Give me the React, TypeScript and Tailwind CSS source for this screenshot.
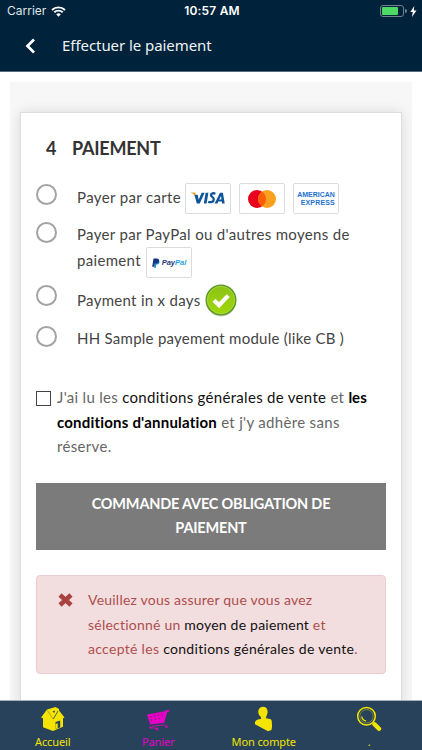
import React from "react";

function Radio() {
  return <span className="block h-[21px] w-[21px] shrink-0 rounded-full border-2 border-[#a3a3a3] bg-white" />;
}

function PayCard({ children }: { children: React.ReactNode }) {
  return (
    <span className="flex h-[31px] w-[46px] shrink-0 items-center justify-center rounded-[2px] border border-[#dcdcdc] bg-white">
      {children}
    </span>
  );
}

function Visa() {
  return (
    <svg width="44" height="29" viewBox="0 0 44 29">
      <path d="M5 8.5h4.3l1.4 6.5-1.8-2.6C8.300 11 7 9.700 5 8.800z" fill="#eba337" />
      <path d="M8.500 11l2.300 8.500h3L18.600 8.700h-3l-2.900 7-1-5z" fill="#0e5599" />
      <path d="M19.600 8.700h2.800l-1.800 10.800h-2.800z" fill="#0e5599" />
      <path d="M29.400 9.700c-2-.8-4.300-.5-4.500 1.200-.2 2 3 2 2.900 4.500-.1 2.700-2.900 3.300-5.600 2.400" fill="none" stroke="#0e5599" strokeWidth="2.300" />
      <path d="M28.600 19.500L34 8.700h2.900L38.700 19.500h-2.600l-.3-1.900h-3.500l-.9 1.900zM33.200 15.500h2.300l-.5-3.500z" fill="#0e5599" fillRule="evenodd" />
    </svg>
  );
}

function Mastercard() {
  return (
    <svg width="30" height="20" viewBox="0 0 30 20">
      <circle cx="10" cy="10" r="9" fill="#e8001d" />
      <circle cx="20" cy="10" r="9" fill="#f9a01f" />
      <path d="M15 2.520a9 9 0 0 1 0 14.960a9 9 0 0 1 0-14.960z" fill="#fb5e0b" />
    </svg>
  );
}

function PayPalMark() {
  return (
    <svg width="8" height="10" viewBox="0 0 8 10">
      <path d="M3 2h3.500c1.300.5 1.200 2.200.6 3.200C6.500 6.200 5.500 6.500 4.300 6.500L3.800 9.700H2z" fill="#1f8fd6" />
      <path d="M1.500.5h3.200c2 0 2.700 1.100 2.300 2.700C6.600 5 5.300 5.600 3.500 5.600h-.8L2.200 8.700H.2z" fill="#14357f" />
    </svg>
  );
}

function GreenCheck() {
  return (
    <svg width="32" height="33" viewBox="0 0 32 33" className="shrink-0">
      <defs>
        <linearGradient id="lime" x1="0" y1="0" x2="0" y2="1">
          <stop offset="0" stopColor="#8cc414" />
          <stop offset="1" stopColor="#9fd60a" />
        </linearGradient>
      </defs>
      <ellipse cx="16" cy="17.500" rx="15" ry="15" fill="#c9cfc0" />
      <circle cx="16" cy="16" r="15.500" fill="#5d9a22" />
      <circle cx="16" cy="16" r="13.700" fill="url(#lime)" stroke="#b4dd55" strokeWidth="0.800" />
      <path d="M9 16.300l5 4.900 9.200-9.600" fill="none" stroke="#fff" strokeWidth="4.200" />
    </svg>
  );
}

function StatusBar() {
  return (
    <div className="flex h-[22px] items-center pl-[7px] pr-[5px] font-[Inter,sans-serif] text-white">
      <div className="flex flex-1 items-center gap-[5px]">
        <span className="text-[12px] text-[#dfe5ea]">Carrier</span>
        <svg width="15" height="11" viewBox="0 0 15 11">
          <path d="M1 4a9.400 9.400 0 0 1 13 0M3.300 6.300a6 6 0 0 1 8.400 0" fill="none" stroke="#fff" strokeWidth="1.900" />
          <path d="M5.200 8.300a3.400 3.400 0 0 1 4.600 0L7.500 10.700z" fill="#fff" />
        </svg>
      </div>
      <span className="text-[12px] font-semibold tracking-[0.200px]">10:57 AM</span>
      <div className="flex flex-1 items-center justify-end">
        <span className="flex h-[12px] w-[24px] rounded-[3px] border border-[#70818f] p-px">
          <span className="w-[16px] rounded-[1px] bg-[#4cd964]" />
        </span>
        <span className="ml-px h-[4px] w-[2px] rounded-r-full bg-[#70818f]" />
        <svg width="7" height="11" viewBox="0 0 7 11" className="ml-[3px]">
          <path d="M4.300 0L0.300 6h2.500L2 11l4.500-6.500H3.800z" fill="#fff" />
        </svg>
      </div>
    </div>
  );
}

function HomeIcon() {
  return (
    <svg width="26" height="26" viewBox="0 0 26 26">
      <path d="M1 11.500L7 3.500 15.500 1 19 3v1.500l5.500 7-1.500.8v8.500L13 25 3 21.200v-9z" fill="#f5e400" />
      <path d="M13.300 13L18 5" fill="none" stroke="#27425a" strokeWidth="0.800" />
      <path d="M7.500 4.500l5.500 8.500" fill="none" stroke="#8c8b34" strokeWidth="0.700" />
      <path d="M15.500 22.700v-6.700l4.700-1.600v7z" fill="#27425a" />
      <path d="M15.500 22.700V18l2.200-.8V22z" fill="#f5e400" />
      <path d="M12.500 5.500l2.500-1-.7 2.500z" fill="#27425a" />
    </svg>
  );
}

function CartIcon() {
  return (
    <svg width="26" height="26" viewBox="0 0 26 26">
      <path d="M2 8.500l18-3.300 1-1.200 3.500.3-.3 1.200-2 .4-3 10.800-14 1.800z" fill="#e800c8" />
      <path d="M5 10l1.500 1M9 9l1 1.500M13 8.500l.8 1.500M17 7.800l.5 1.500M6 13.500l1 1M10 13l.7 1M14 12.300l.6 1" stroke="#80236f" strokeWidth="1.200" />
      <path d="M7 20.300l13-1.500 2 2.200M5 21.500l7 1" fill="none" stroke="#c40fab" strokeWidth="1" />
      <circle cx="5.500" cy="21.500" r="1.300" fill="#c40fab" />
      <circle cx="12" cy="23" r="1.400" fill="#c40fab" />
      <circle cx="21.500" cy="20.800" r="1.300" fill="#c40fab" />
    </svg>
  );
}

function UserIcon() {
  return (
    <svg width="26" height="26" viewBox="0 0 26 26">
      <path d="M9.500 1.500C11.500.3 15 .7 16 3c1 2.200.8 5-.5 7l-.7 2.300 4.500.8c2 .8 1.500 4 1.800 7.200L20.500 24 17 25.200 4 18.200c-.4-2.500.5-4 3-4.700l3.200-.8-.5-1.900C6.500 8.500 6.500 3 9.500 1.500z" fill="#f5e400" />
    </svg>
  );
}

function SearchIcon() {
  return (
    <svg width="26" height="26" viewBox="0 0 26 26">
      <circle cx="10.500" cy="10.300" r="8.800" fill="none" stroke="#f5e400" strokeWidth="1.500" />
      <circle cx="10.500" cy="10.300" r="6.700" fill="none" stroke="#b5ae25" strokeWidth="0.600" />
      <path d="M5.800 10.500c.3 2.300 1.800 4 4.300 4.400" fill="none" stroke="#f5e400" strokeWidth="1.300" />
      <path d="M18.500 18.300l4.500 4.500" stroke="#f5e400" strokeWidth="4.400" strokeLinecap="round" />
    </svg>
  );
}

function Tab({ icon, label, active }: { icon: React.ReactNode; label: string; active?: boolean }) {
  return (
    <div className={`flex flex-1 flex-col items-center pt-[5px] ${active ? "text-[#e800c8]" : "text-[#f5e400]"}`}>
      {icon}
      <span className="mt-[2px] h-[16px] text-[11px] leading-[16px] tracking-[-0.100px] whitespace-nowrap">{label}</span>
    </div>
  );
}

export default function App() {
  return (
    <div className="flex h-[750px] w-[422px] flex-col overflow-hidden bg-white font-[Lato,sans-serif] text-[15px] whitespace-nowrap text-[#444]">
      <header className="h-[72px] shrink-0 border-b border-[#56697a] bg-[#00223a]">
        <StatusBar />
        <div className="flex h-[47px] items-center pl-[25px]">
          <svg width="11" height="16" viewBox="0 0 11 16">
            <path d="M9 1.500L2.500 8 9 14.500" fill="none" stroke="#fff" strokeWidth="2.700" />
          </svg>
          <h1 className="-mt-px ml-[26px] font-['Noto_Sans',sans-serif] text-[15px] tracking-[-0.060px] text-[#eef2f5]">Effectuer le paiement</h1>
        </div>
      </header>

      <main className="mx-[10px] mt-[10px] h-[618px] shrink-0 overflow-hidden bg-[#f7f7f7] px-[10px] pt-[30px]">
        <section className="h-[600px] border border-[#dedede] bg-white px-[15px] shadow-[0_0_12px_rgba(0,0,0,0.120)]">
          <h2 className="flex h-[71px] items-center pl-[10px] text-[18px] font-bold text-[#333]">
            <span className="w-[26px]">4</span>
            <span className="tracking-[-0.250px]">PAIEMENT</span>
          </h2>

          <div className="flex h-[37px] items-start">
            <Radio />
            <div className="-mt-px ml-[20px] flex h-[31px] items-start">
              <span className="w-[108px] leading-[28px] tracking-[0.360px]">Payer par carte</span>
              <div className="flex gap-[8px]">
                <PayCard><Visa /></PayCard>
                <PayCard><Mastercard /></PayCard>
                <PayCard>
                  <span className="flex flex-col items-end font-['Liberation_Sans',sans-serif] text-[7px] leading-[8px] font-bold text-[#1f72cd]">
                    <span className="h-[8px]">AMERICAN</span>
                    <span className="h-[8px] tracking-[0.150px]">EXPRESS</span>
                  </span>
                </PayCard>
              </div>
            </div>
          </div>

          <div className="flex h-[64px] items-start pt-[1px]">
            <Radio />
            <div className="ml-[20px] flex flex-col">
              <span className="h-[25px] leading-[25px] tracking-[0.330px]">Payer par PayPal ou d'autres moyens de</span>
              <div className="flex h-[31px] items-start">
                <span className="w-[69px] leading-[26px] tracking-[0.330px]">paiement</span>
                <PayCard>
                  <span className="flex items-center gap-[2px] font-['Liberation_Sans',sans-serif] text-[7.500px] font-bold italic">
                    <PayPalMark />
                    <span className="leading-[10px] text-[#253b80]">Pay<span className="text-[#2ba3df]">Pal</span></span>
                  </span>
                </PayCard>
              </div>
            </div>
          </div>

          <div className="flex h-[41px] items-start">
            <Radio />
            <div className="-mt-px ml-[20px] flex h-[32px] items-center">
              <span className="w-[128px] tracking-[0.300px]">Payment in x days</span>
              <GreenCheck />
            </div>
          </div>

          <div className="flex h-[65px] items-start">
            <Radio />
            <span className="-mt-px ml-[20px] leading-[26px] tracking-[0.260px]">HH Sample payement module (like CB )</span>
          </div>

          <div className="flex h-[92px]">
            <span className="h-[15px] w-[15px] shrink-0 border border-[#444]" />
            <p className="-mt-[6px] ml-[6px] leading-[24.500px] text-[#666]">
              <span className="tracking-[0.300px]">J'ai lu les <span className="text-[#111]">conditions générales de vente</span> et </span>
              <b className="text-black">les</b>
              <br />
              <b className="tracking-[0.200px] text-black">conditions d'annulation</b>
              <span className="tracking-[0.320px]"> et j'y adhère sans<br />réserve.</span>
            </p>
          </div>

          <div className="flex h-[67px] flex-col items-center justify-center bg-[#7b7b7b] pb-[2px] text-[14.500px] leading-[23.500px] font-bold tracking-[-0.200px] text-white">
            <span>COMMANDE AVEC OBLIGATION DE</span>
            <span>PAIEMENT</span>
          </div>

          <div className="mt-[25px] flex h-[99px] rounded-[4px] border border-[#ecccd0] bg-[#f2dede] pt-[12px] pl-[21px] text-[14px] text-[#ae4e4e]">
            <svg width="15" height="14" viewBox="0 0 15 14" className="mt-[5px] shrink-0">
              <path d="M2 2l11 10M13 2L2 12" stroke="#aa4340" strokeWidth="4.600" />
            </svg>
            <p className="ml-[15px] leading-[24.500px]">
              <span className="tracking-[0.220px]">Veuillez vous assurer que vous avez</span><br />
              <span className="tracking-[0.220px]">sélectionné un <span className="text-[#111]">moyen de paiement</span> et</span><br />
              <span className="tracking-[0.300px]">accepté les <span className="text-[#111]">conditions générales de vente</span>.</span>
            </p>
          </div>
        </section>
      </main>

      <nav className="flex h-[50px] shrink-0 border-t border-[#a9b2ba] bg-[#27425a] font-['Noto_Sans',sans-serif]">
        <Tab icon={<HomeIcon />} label="Accueil" />
        <Tab icon={<CartIcon />} label="Panier" active />
        <Tab icon={<UserIcon />} label="Mon compte" />
        <Tab icon={<SearchIcon />} label="." />
      </nav>
    </div>
  );
}
